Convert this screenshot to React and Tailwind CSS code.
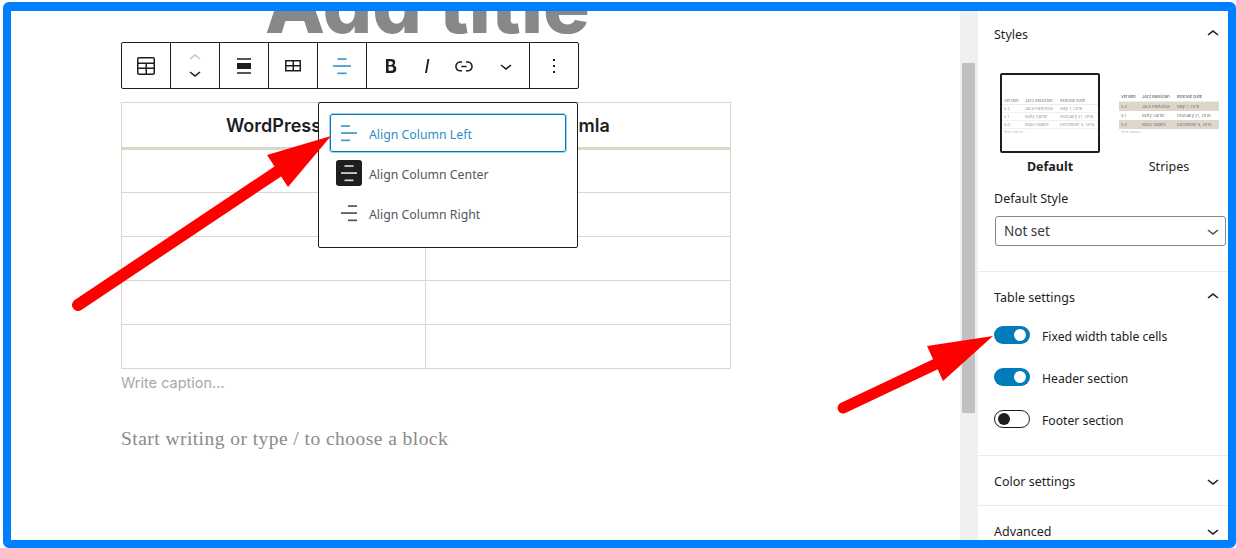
import React from 'react';

const UI_FONT = "font-['Noto_Sans',sans-serif]";

const Icon = ({ d, size = 24, className = '' }) => (
  <svg width={size} height={size} viewBox="0 0 24 24" fill="currentColor" className={className}>
    <path d={d} />
  </svg>
);

const ICONS = {
  table: 'M19 3H5c-1.1 0-2 .9-2 2v14c0 1.1.9 2 2 2h14c1.1 0 2-.9 2-2V5c0-1.1-.9-2-2-2zM5 4.5h14c.3 0 .5.2.5.5v3.5h-15V5c0-.3.2-.5.5-.5zm8 5.5h6.5v3.5H13V10zm-1.5 3.5h-7V10h7v3.5zm-7 5.5v-4h7v4.5H5c-.3 0-.5-.2-.5-.5zm14.5.5h-6V15h6.5v4c0 .3-.2.5-.5.5z',
  grid: 'M4 6v11.5h16V6H4zm1.5 1.5h6V11h-6V7.5zm0 8.5v-3.5h6V16h-6zm13 0H13v-3.5h5.5V16zM13 11V7.5h5.5V11H13z',
  alignNone: 'M5 15h14V9H5v6zm0 4.8h14v-1.5H5v1.5zM5 4.2v1.5h14V4.2H5z',
  up: 'M6.5 12.4L12 8l5.5 4.4-.9 1.2L12 10l-4.5 3.6-1-1.2z',
  down: 'M17.5 11.6L12 16l-5.5-4.4.9-1.2L12 14l4.5-3.6 1 1.2z',
  bold: 'M14.7 11.3c1-.6 1.5-1.6 1.5-3 0-2.3-1.5-3.3-4.5-3.3H7v14h5.8c1.4 0 2.5-.3 3.3-1 .8-.7 1.2-1.7 1.2-2.9.1-1.9-.8-3.3-2.6-3.8zm-5.1-4.1h1.8c1.7 0 2.4.7 2.4 1.9 0 1.3-.8 2-2.4 2H9.6V7.2zm3.3 9.6H9.6v-4.3h2.3c1.7 0 2.5.7 2.5 2.1.1 1.4-.8 2.2-2.5 2.2z',
  italic: 'M12.5 5L10 19h1.9l2.5-14z',
  link: 'M15.6 7.2H14v1.5h1.6c2 0 3.7 1.7 3.7 3.7s-1.7 3.7-3.7 3.7H14v1.5h1.6c2.8 0 5.2-2.3 5.2-5.2 0-2.9-2.3-5.2-5.2-5.2zM4.7 12.4c0-2 1.7-3.7 3.7-3.7H10V7.2H8.4c-2.9 0-5.2 2.3-5.2 5.2 0 2.9 2.3 5.2 5.2 5.2H10v-1.5H8.4c-2 0-3.7-1.7-3.7-3.7zm4.6.9h5.3v-1.5H9.3v1.5z',
  more: 'M13 19h-2v-2h2v2zm0-6h-2v-2h2v2zm0-6h-2V5h2v2z',
};

// three bars, the short ones sit left, centre or right of the long one
const AlignBars = ({ x, long = 16 }) => (
  <svg width="24" height="24" viewBox="0 0 24 24" fill="currentColor">
    <rect x={x} y="4.2" width="9" height="1.7" />
    <rect x={12 - long / 2} y="11.2" width={long} height="1.7" />
    <rect x={x} y="18.5" width="9" height="1.7" />
  </svg>
);

const ToolBtn = ({ children, className = '' }) => (
  <div className={`w-[49px] h-full flex items-center justify-center border-r border-[#1e1e1e] text-[#1e1e1e] ${className}`}>
    {children}
  </div>
);

const Toolbar = () => (
  <div className="flex w-[458px] h-[47px] border border-[#1e1e1e] rounded-[2px] bg-white">
    <ToolBtn><Icon d={ICONS.table} /></ToolBtn>
    <ToolBtn className="flex-col">
      <Icon d={ICONS.up} className="text-[#c4c4c4] -mb-[9px]" />
      <Icon d={ICONS.down} />
    </ToolBtn>
    <ToolBtn><Icon d={ICONS.alignNone} /></ToolBtn>
    <ToolBtn><Icon d={ICONS.grid} /></ToolBtn>
    <ToolBtn className="text-[#3d9bcf]"><AlignBars x="7.5" long={18} /></ToolBtn>
    <div className="w-[163px] h-full flex items-center border-r border-[#1e1e1e] text-[#1e1e1e] pl-[12px]">
      <Icon d={ICONS.bold} />
      <Icon d={ICONS.italic} className="ml-[12px]" />
      <Icon d={ICONS.link} className="ml-[13px]" />
      <Icon d={ICONS.down} className="ml-[18px]" />
    </div>
    <div className="flex-1 flex items-center justify-center text-[#1e1e1e]">
      <Icon d={ICONS.more} />
    </div>
  </div>
);

const ROWS = [0, 1, 2, 3, 4];

const EditorTable = () => (
  <table className="w-[610px] table-fixed border-collapse font-['Inter',sans-serif] text-[#1e1e1e]">
    <thead>
      <tr className="h-[46px] border-b-[3px] border-[#ddd7c9]">
        <th className="w-[304px] border border-[#ddd7c9] border-b-[3px] text-[18px] font-semibold">WordPress</th>
        <th className="border border-[#ddd7c9] border-b-[3px] text-[18px] font-semibold">Joomla</th>
      </tr>
    </thead>
    <tbody>
      {ROWS.map((r) => (
        <tr key={r} className="h-[44px]">
          <td className="border border-[#ddd7c9]"></td>
          <td className="border border-[#ddd7c9]"></td>
        </tr>
      ))}
    </tbody>
  </table>
);

const MenuItem = ({ label, x, state }) => (
  <div
    className={`flex items-center h-[38px] rounded-[3px] pl-[5px] ${
      state === 'active' ? 'border border-[#007cba] ring-1 ring-[#9fd0e6] text-[#2e8fc4]' : 'border border-transparent text-[#50575e]'
    }`}
  >
    <span
      className={`w-[26px] h-[26px] rounded-[3px] flex items-center justify-center ${
        state === 'dark' ? 'bg-[#1e1e1e] text-[#d8d8d8]' : state === 'active' ? 'text-[#3d9bcf]' : 'text-[#555555]'
      }`}
    >
      <AlignBars x={x} />
    </span>
    <span className="ml-[7px] pt-[4px] text-[12.3px]">{label}</span>
  </div>
);

const AlignMenu = () => (
  <div className={`absolute left-[307px] top-[91px] w-[260px] h-[146px] bg-white border border-[#1e1e1e] rounded-[2px] pt-[11px] pl-[11px] pr-[11px] flex flex-col gap-[2px] ${UI_FONT}`}>
    <MenuItem label="Align Column Left" x="4" state="active" />
    <MenuItem label="Align Column Center" x="7.5" state="dark" />
    <MenuItem label="Align Column Right" x="11" />
  </div>
);

const PREVIEW_ROWS = [
  ['5.2', 'Jaco Pastorius', 'May 7, 2019'],
  ['5.1', 'Betty Carter', 'February 21, 2019'],
  ['5.0', 'Bebo Valdés', 'December 6, 2018'],
];

const StylePreview = ({ striped }) => (
  <div className={`w-full font-['Inter',sans-serif] text-[4px] blur-[0.3px] ${striped ? 'leading-[9px] text-[#777777]' : 'leading-[7px] text-[#a0a0a0]'}`}>
    <div className="grid grid-cols-[21px_35px_1fr] font-semibold border-b border-[#ececec] px-[2px]">
      <span>Version</span>
      <span>Jazz Musician</span>
      <span>Release Date</span>
    </div>
    {PREVIEW_ROWS.map((row, i) => (
      <div
        key={row[0]}
        className={`grid grid-cols-[21px_35px_1fr] px-[2px] ${striped ? (i !== 1 ? 'bg-[#dcd7ca]' : '') : 'border-b border-[#f0f0f0]'}`}
      >
        <span>{row[0]}</span>
        <span>{row[1]}</span>
        <span>{row[2]}</span>
      </div>
    ))}
    <div className="text-[#bbbbbb] px-[2px] text-[3px] leading-[6px]">Write caption...</div>
  </div>
);

const Toggle = ({ on, label }) => (
  <div className="flex items-center h-[18px]">
    {on ? (
      <span className="w-[36px] h-[18px] rounded-full bg-[#007cba] flex items-center justify-end pr-[4px]">
        <span className="w-[12px] h-[12px] rounded-full bg-white"></span>
      </span>
    ) : (
      <span className="w-[36px] h-[18px] rounded-full border border-[#1e1e1e] bg-white flex items-center pl-[3px]">
        <span className="w-[12px] h-[12px] rounded-full bg-[#1e1e1e]"></span>
      </span>
    )}
    <span className="ml-[12px] pt-[4px] text-[12.2px] text-[#1e1e1e]">{label}</span>
  </div>
);

const PanelTitle = ({ title, open }) => (
  <div className="flex items-center justify-between text-[#1e1e1e]">
    <span className="pt-[2px] text-[12.5px]">{title}</span>
    <Icon d={open ? ICONS.up : ICONS.down} className="mr-[3px]" />
  </div>
);

const Sidebar = () => (
  <aside className={`w-[250px] h-full overflow-hidden bg-white ${UI_FONT}`}>
    <section className="h-[261px] border-b border-[#e8eaeb] pl-[16px] pt-[11px]">
      <PanelTitle title="Styles" open />
      <div className="flex mt-[27px] ml-[6px]">
        <div className="w-[100px]">
          <div className="h-[80px] border-2 border-[#1e1e1e] rounded-[2px] flex items-center pt-[6px]">
            <StylePreview />
          </div>
          <div className="text-center text-[12.5px] font-bold text-[#1e1e1e] mt-[5px]">Default</div>
        </div>
        <div className="w-[100px] ml-[19px]">
          <div className="h-[80px] flex items-center">
            <StylePreview striped />
          </div>
          <div className="text-center text-[12.5px] text-[#1e1e1e] mt-[5px]">Stripes</div>
        </div>
      </div>
      <div className="text-[12.5px] text-[#1e1e1e] mt-[13px]">Default Style</div>
      <div className="w-[231px] h-[30px] mt-[7px] ml-[1px] border border-[#7e8993] rounded-[3px] flex items-center justify-between pl-[8px] text-[13.5px] text-[#32373c]">
        <span className="pt-[2px]">Not set</span>
        <Icon d={ICONS.down} className="text-[#50575e]" />
      </div>
    </section>
    <section className="h-[184px] border-b border-[#e8eaeb] pl-[16px] pt-[13px]">
      <PanelTitle title="Table settings" open />
      <div className="flex flex-col gap-[24px] mt-[17px]">
        <Toggle on label="Fixed width table cells" />
        <Toggle on label="Header section" />
        <Toggle label="Footer section" />
      </div>
    </section>
    <section className="h-[50px] border-b border-[#e8eaeb] pl-[16px] pt-[13px]">
      <PanelTitle title="Color settings" />
    </section>
    <section className="pl-[16px] pt-[13px]">
      <PanelTitle title="Advanced" />
    </section>
  </aside>
);

// the two red annotation arrows lie over the whole page
const Arrows = () => (
  <svg className="absolute left-0 top-0 pointer-events-none" width="1236" height="548" viewBox="0 0 1236 548">
    <line x1="78" y1="305" x2="277" y2="172" stroke="#ff0000" strokeWidth="12" strokeLinecap="round" />
    <polygon points="331,136 267,155 288,187" fill="#ff0000" />
    <line x1="843" y1="408" x2="936" y2="364" stroke="#ff0000" strokeWidth="11" strokeLinecap="round" />
    <polygon points="993,336 927,346 943,381" fill="#ff0000" />
  </svg>
);

export default function App() {
  return (
    <div className="relative w-[1236px] h-[548px] bg-white overflow-hidden pt-[2px] pl-[3px]">
      <div className="flex w-full h-full border-[8px] border-t-[9px] border-[#0080ff] rounded-[6px] overflow-hidden bg-white">
        <main className="relative w-[949px] h-full overflow-hidden pl-[110px]">
          <h1 className="absolute left-[254px] top-[-51px] font-['Inter',sans-serif] font-extrabold text-[78px] leading-[90px] text-[#888888] whitespace-nowrap">
            Add title
          </h1>
          <div className="pt-[31px]">
            <Toolbar />
          </div>
          <div className="mt-[13px]">
            <EditorTable />
          </div>
          <div className="mt-[3px] font-['Inter',sans-serif] text-[14.5px] text-[#a8a8a8]">Write caption...</div>
          <div className="mt-[30px] font-['Liberation_Serif',serif] text-[19.5px] tracking-[0.45px] text-[#8a8a8a]">
            Start writing or type / to choose a block
          </div>
          <AlignMenu />
        </main>
        <div className="w-[18px] h-full bg-[#f0f0f0] pt-[52px] pl-[2px]">
          <div className="w-[13px] h-[350px] bg-[#c1c1c1]"></div>
        </div>
        <Sidebar />
      </div>
      <Arrows />
    </div>
  );
}
